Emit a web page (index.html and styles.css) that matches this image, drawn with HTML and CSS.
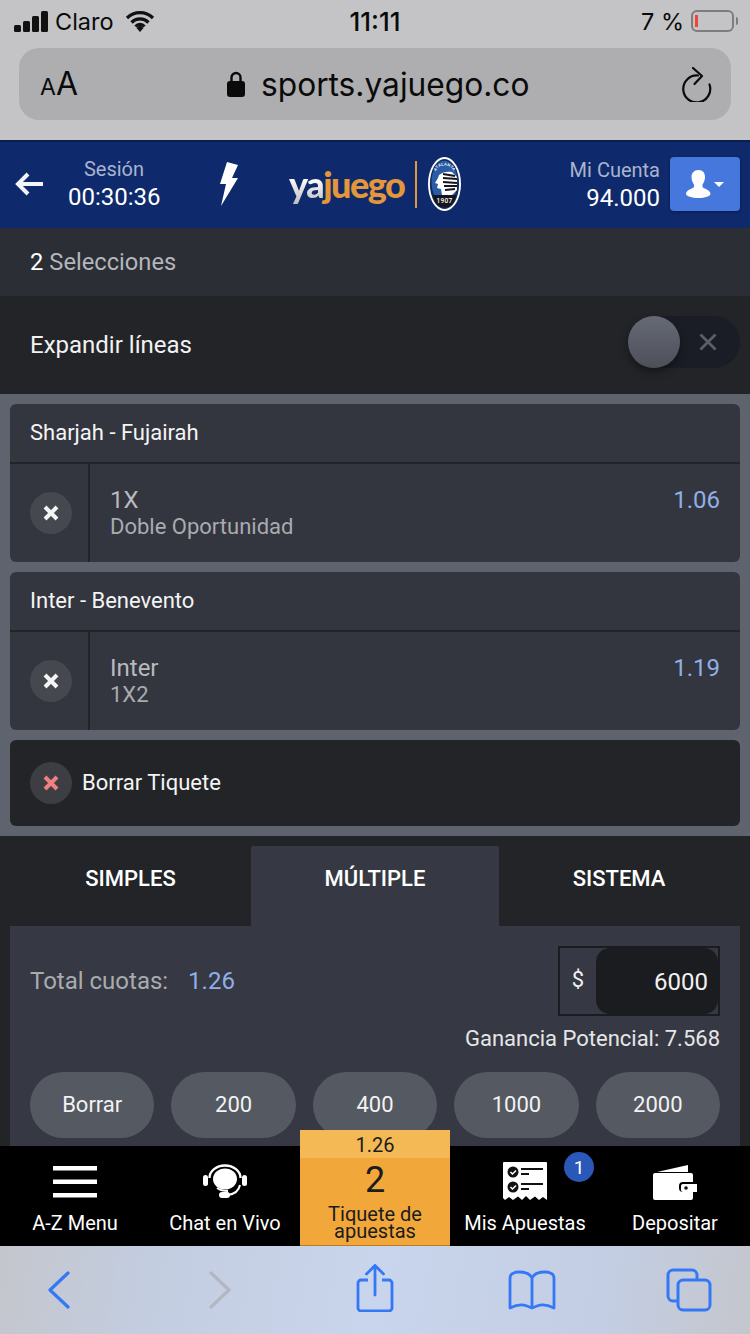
FILE: index.html
```html
<!DOCTYPE html>
<html lang="es">
<head>
<meta charset="utf-8">
<title>yajuego</title>
<link rel="stylesheet" href="styles.css">
</head>
<body>
<div class="page">
  <div class="browser-top">
    <div class="status">
      <div class="status-left">
        <svg class="signal" width="34" height="21" viewBox="0 0 34 21"><rect x="0" y="14" width="7" height="7" rx="1.5"/><rect x="9" y="10" width="7" height="11" rx="1.5"/><rect x="18" y="5" width="7" height="16" rx="1.5"/><rect x="27" y="0" width="7" height="21" rx="1.5"/></svg>
        <span>Claro</span>
        <svg class="wifi" width="30" height="22" viewBox="0 0 30 22"><path d="M2 8a18.500 18.500 0 0 1 26 0M6.500 12.500a12 12 0 0 1 17 0M10.500 16.500a6 6 0 0 1 9 0" fill="none" stroke="#111" stroke-width="3.200"/><path d="M11.500 18l3.500-3.500 3.500 3.500-3.500 4z" fill="#111"/></svg>
      </div>
      <div class="status-time">11:11</div>
      <div class="status-right">
        <span>7 %</span>
        <div class="battery"><i class="battery-level"></i></div>
        <i class="battery-cap"></i>
      </div>
    </div>
    <div class="urlbar">
      <div class="aa"><small>A</small>A</div>
      <div class="url">
        <svg width="18" height="26" viewBox="0 0 18 26"><path d="M4.500 11V6.500a4.500 4.500 0 0 1 9 0V11" fill="none" stroke="#0a0a0a" stroke-width="2.400"/><rect y="10" width="18" height="16" rx="3" fill="#0a0a0a"/></svg>
        <span>sports.yajuego.co</span>
      </div>
      <svg class="reload" width="32" height="36" viewBox="0 0 32 36"><path d="M18 9.500A13.500 13.500 0 1 0 29.500 18.500" fill="none" stroke="#0a0a0a" stroke-width="2.200" stroke-linecap="round"/><path d="M13 2l9 8-7.500 8" fill="none" stroke="#0a0a0a" stroke-width="2.200" stroke-linecap="round" stroke-linejoin="round"/></svg>
    </div>
  </div>

  <header class="site-header">
    <svg class="back" width="30" height="26" viewBox="0 0 30 26"><path d="M29 13H4M14 3L4 13l10 10" fill="none" stroke="#f2f4fa" stroke-width="4"/></svg>
    <div class="session">
      <div class="muted">Sesión</div>
      <div class="clock">00:30:36</div>
    </div>
    <svg class="bolt" width="18" height="44" viewBox="0 0 18 44"><path d="M7 0l11 3-6 13h6L1 44l5-22H0z" fill="#fff"/></svg>
    <div class="logo">
      <span class="logo-ya">ya</span><span class="logo-juego">juego</span>
      <i class="logo-rule"></i>
      <svg width="33" height="54" viewBox="0 0 33 54">
        <ellipse cx="16.500" cy="27" rx="16.500" ry="27" fill="#fff"/>
        <ellipse cx="16.500" cy="27" rx="14.600" ry="25" fill="#12275c"/>
        <ellipse cx="16.500" cy="25" rx="13" ry="21.500" fill="#2a5ba6"/>
        <path d="M4.500 38h24C26.500 46 22 50.500 16.500 50.500S6.500 46 4.500 38z" fill="#14161b"/>
        <path d="M11 18c3-3 9-4 13-3l5 5v13l-5 5H14l-1-6-4-1 1-4-3-1 3-5z" fill="#fff"/>
        <path d="M15 17l12 2M15 21l14 1M15 25l14 1M16 29l13 0M17 33l10-1" stroke="#14161b" stroke-width="1.800"/>
        <path id="crest-arc" d="M6 21C7 12 11 8.500 16.500 8.500S26 12 27 21" fill="none"/>
        <text class="crest-name"><textPath href="#crest-arc" startOffset="50%" text-anchor="middle">ATALANTA</textPath></text>
        <text class="crest-year" x="16.500" y="46" text-anchor="middle">1907</text>
      </svg>
    </div>
    <div class="account">
      <div class="account-text">
        <div class="muted">Mi Cuenta</div>
        <div class="clock">94.000</div>
      </div>
      <button class="account-btn">
        <svg width="38" height="28" viewBox="0 0 38 28"><path d="M12.500 0c4.500 0 6.500 3 6.500 7 0 3.500-1.500 6-2.500 7.500v2.500c2 2 8 3 8 7 0 2-5.500 4-12 4S0 26 0 24c0-4 6-5 8-7v-2.500C7 13 5.500 10.500 5.500 7c0-4 2.500-7 7-7z" fill="#fff"/><path d="M28 12h10l-5 5z" fill="#fff"/></svg>
      </button>
    </div>
  </header>

  <div class="selections"><b>2</b> Selecciones</div>

  <div class="expand">
    <span>Expandir líneas</span>
    <div class="toggle">
      <i class="knob"></i>
      <svg width="18" height="18" viewBox="0 0 18 18"><path d="M1.500 1.500l15 15M16.500 1.500l-15 15" stroke="#5c5f69" stroke-width="2.800"/></svg>
    </div>
  </div>

  <main class="content">
    <div class="slips">
      <section class="slip">
        <h2 class="slip-title">Sharjah - Fujairah</h2>
        <div class="slip-row">
          <div class="slip-remove"><span class="circle"><svg width="16" height="16" viewBox="0 0 16 16"><path d="M2 2l12 12M14 2L2 14" stroke="#f4f4f4" stroke-width="4"/></svg></span></div>
          <div class="slip-info">
            <div class="slip-pick">1X</div>
            <div class="slip-market">Doble Oportunidad</div>
          </div>
          <div class="slip-odd">1.06</div>
        </div>
      </section>
      <section class="slip">
        <h2 class="slip-title">Inter - Benevento</h2>
        <div class="slip-row">
          <div class="slip-remove"><span class="circle"><svg width="16" height="16" viewBox="0 0 16 16"><path d="M2 2l12 12M14 2L2 14" stroke="#f4f4f4" stroke-width="4"/></svg></span></div>
          <div class="slip-info">
            <div class="slip-pick">Inter</div>
            <div class="slip-market">1X2</div>
          </div>
          <div class="slip-odd">1.19</div>
        </div>
      </section>
      <div class="clear-ticket">
        <span class="circle"><svg width="16" height="16" viewBox="0 0 16 16"><path d="M2 2l12 12M14 2L2 14" stroke="#ef8080" stroke-width="4"/></svg></span>
        <span class="clear-label">Borrar Tiquete</span>
      </div>
    </div>

    <div class="betbox">
      <div class="tabs">
        <div class="tab">SIMPLES</div>
        <div class="tab tab-active">MÚLTIPLE</div>
        <div class="tab">SISTEMA</div>
      </div>
      <div class="panel">
        <div class="stake-row">
          <div class="total">Total cuotas: <span class="total-value">1.26</span></div>
          <div class="stake">
            <span class="currency">$</span>
            <span class="stake-input">6000</span>
          </div>
        </div>
        <div class="gain">Ganancia Potencial: 7.568</div>
        <div class="quick">
          <button>Borrar</button>
          <button>200</button>
          <button>400</button>
          <button>1000</button>
          <button>2000</button>
        </div>
      </div>
    </div>
  </main>

  <nav class="bottom-nav">
    <div class="nav-item">
      <div class="nav-icon"><svg width="44" height="32" viewBox="0 0 44 32"><path d="M0 0h44v4.500H0zM0 13.500h44V18H0zM0 27h44v4.500H0z" fill="#fff"/></svg></div>
      <span>A-Z Menu</span>
    </div>
    <div class="nav-item">
      <div class="nav-icon"><svg width="44" height="36" viewBox="0 0 44 36"><path d="M6.500 14a15.500 12.500 0 0 1 31 0" fill="none" stroke="#fff" stroke-width="2.400"/><ellipse cx="22" cy="15" rx="12" ry="10.500" fill="#fff"/><rect x="0" y="11" width="5" height="11" rx="2.500" fill="#fff"/><rect x="39" y="11" width="5" height="11" rx="2.500" fill="#fff"/><path d="M37 21c-1 5-5 9-12 10" fill="none" stroke="#fff" stroke-width="2"/><rect x="16" y="28" width="11" height="6" rx="3" fill="#fff"/><path d="M14 24c3 2 6 3 11 3" fill="none" stroke="#fff" stroke-width="2"/></svg></div>
      <span>Chat en Vivo</span>
    </div>
    <div class="nav-ticket">
      <div class="ticket-odds">1.26</div>
      <div class="ticket-main">
        <div class="ticket-count">2</div>
        <div class="ticket-label">Tiquete de apuestas</div>
      </div>
    </div>
    <div class="nav-item">
      <div class="nav-icon"><svg width="44" height="40" viewBox="0 0 44 40"><path d="M1 0h42a1 1 0 0 1 1 1v37l-4-3-4 3-4-3.500-5 3.500-4-4-4 4-4-3.500-5 3.500-4-3-4 3-2-2V1a1 1 0 0 1 1-1z" fill="#fff"/><circle cx="10" cy="10" r="5.500" fill="#111"/><circle cx="10" cy="25" r="5.500" fill="#111"/><path d="M7.500 10l2 2 3.500-3.500M7.500 25l2 2 3.500-3.500" fill="none" stroke="#fff" stroke-width="1.500"/><path d="M18 7h22M18 12h8M18 22h22M18 27h8" stroke="#111" stroke-width="2"/></svg></div>
      <span>Mis Apuestas</span>
      <i class="badge">1</i>
    </div>
    <div class="nav-item">
      <div class="nav-icon"><svg width="44" height="36" viewBox="0 0 44 36"><path d="M4 8L35 1v7z" fill="#fff"/><path d="M2 9h36a2 2 0 0 1 2 2v7H30a4 4 0 0 0-4 4v2a4 4 0 0 0 4 4h10v6a2 2 0 0 1-2 2H2a2 2 0 0 1-2-2V11a2 2 0 0 1 2-2z" fill="#fff"/><path d="M30 20h14v8H30a2 2 0 0 1-2-2v-4a2 2 0 0 1 2-2z" fill="#fff"/><circle cx="33" cy="24" r="1.800" fill="#111"/></svg></div>
      <span>Depositar</span>
    </div>
  </nav>

  <div class="browser-bottom">
    <svg class="bar-back" width="24" height="38" viewBox="0 0 24 38"><path d="M21 2L3 19l18 17" fill="none" stroke="#3478f6" stroke-width="3.200" stroke-linecap="round" stroke-linejoin="round"/></svg>
    <svg class="bar-forward" width="24" height="38" viewBox="0 0 24 38"><path d="M3 2l18 17L3 36" fill="none" stroke="#b3b7c1" stroke-width="3.200" stroke-linecap="round" stroke-linejoin="round"/></svg>
    <svg class="bar-share" width="38" height="48" viewBox="0 0 38 48"><path d="M12 16H5a3 3 0 0 0-3 3v25a3 3 0 0 0 3 3h28a3 3 0 0 0 3-3V19a3 3 0 0 0-3-3h-7" fill="none" stroke="#3478f6" stroke-width="2.800"/><path d="M19 31V2M10.500 10L19 1.500 27.500 10" fill="none" stroke="#3478f6" stroke-width="2.800" stroke-linecap="round"/></svg>
    <svg width="48" height="40" viewBox="0 0 48 40"><path d="M24 8C22 3 17 2 11 2 6 2 2 4 2 8v30c6-3 12-4 17-2l5 2 5-2c5-2 11-1 17 2V8c0-4-4-6-9-6-6 0-11 1-13 6zm0 0v30" fill="none" stroke="#3478f6" stroke-width="2.800" stroke-linejoin="round"/></svg>
    <svg width="46" height="44" viewBox="0 0 46 44"><rect x="12" y="12" width="32" height="30" rx="5" fill="none" stroke="#3478f6" stroke-width="3"/><path d="M12 33H7a5 5 0 0 1-5-5V7a5 5 0 0 1 5-5h19a5 5 0 0 1 5 5v5" fill="none" stroke="#3478f6" stroke-width="3"/></svg>
  </div>
</div>
</body>
</html>
```
FILE: styles.css
```css
* { box-sizing: border-box; }
html, body { margin: 0; padding: 0; }
body { font-family: Roboto, "Liberation Sans", sans-serif; background: #000; }
.page { width: 750px; height: 1334px; display: flex; flex-direction: column; overflow: hidden; position: relative; }

/* Safari top */
.browser-top { height: 140px; background: #c4c4c6; color: #0a0a0a; font-family: Inter, Roboto, sans-serif; flex: none; padding: 0 19px; }
.status { height: 48px; margin: 0 -7px 0 -5px; display: grid; grid-template-columns: 1fr auto 1fr; align-items: center; font-size: 23.500px; padding-bottom: 6px; }
.status-left { display: flex; align-items: center; gap: 7px; }
.signal { fill: #111; }
.wifi { margin-left: 4px; }
.status-time { font-size: 26px; font-weight: 500; padding-right: 2px; }
.status-right { display: flex; align-items: center; justify-content: flex-end; gap: 5px; }
.battery { width: 43px; height: 22px; border: 2px solid #7d7d80; border-radius: 6px; padding: 3px 0 3px 2px; margin-left: 2px; }
.battery-level { display: block; width: 3px; height: 12px; background: #ee4538; }
.battery-cap { width: 2px; height: 8px; background: #7d7d80; margin-left: -3px; border-radius: 0 2px 2px 0; }
.urlbar { height: 72px; background: #aeaeb0; border-radius: 20px; display: flex; align-items: center; padding: 0 19px 0 21px; position: relative; }
.aa { font-size: 32px; width: 187px; line-height: 1; }
.aa small { font-size: 23px; }
.url { display: flex; align-items: center; gap: 16px; font-size: 31.700px; flex: 1; }
.reload { flex: none; }

/* Site header */
.site-header { height: 88px; background: #0e2a6c; border-top: 2px solid #0a1f4e; flex: none; display: flex; align-items: center; padding: 0 10px 2px 14px; color: #fff; }
.back { margin-right: 24px; }
.session { width: 92px; text-align: center; margin-right: 60px; }
.muted { font-size: 20px; color: #a9b4cf; line-height: 26px; }
.clock { font-size: 24px; line-height: 30px; color: #fff; }
.bolt { margin-right: 51px; }
.logo { display: flex; align-items: center; width: 172px; font-family: Lato, Inter, sans-serif; font-weight: 900; font-size: 36px; letter-spacing: -1.500px; }
.logo-ya { color: transparent; background: linear-gradient(#ffffff 35%, #b9b9bb); -webkit-background-clip: text; background-clip: text; }
.logo-juego { color: #e3963a; }
.logo-rule { width: 1.500px; height: 47px; background: #e3963a; margin: 0 11px; flex: none; }
.logo svg { flex: none; }
.crest-name { font-family: Roboto, sans-serif; font-size: 4px; font-weight: 500; fill: #fff; letter-spacing: .3px; }
.crest-year { font-family: Roboto, sans-serif; font-size: 6.500px; font-weight: 500; fill: #fff; letter-spacing: .3px; }
.account { display: flex; align-items: center; gap: 10px; margin-left: auto; }
.account-text { text-align: right; padding-top: 2px; }
.account-btn { width: 70px; height: 54px; border: 0; border-radius: 4px; background: #4577dc; box-shadow: 0 1px 3px rgba(0,0,0,.35); display: flex; align-items: center; justify-content: center; padding: 0; }

/* Rows */
.selections { height: 68px; flex: none; background: #2b2e35; color: #b4b6bb; font-size: 23.700px; display: flex; align-items: center; gap: 6px; padding-left: 30px; }
.selections b { font-weight: 400; color: #fff; }
.expand { height: 98px; flex: none; background: #222428; color: #f2f2f3; font-size: 24px; display: flex; align-items: center; justify-content: space-between; padding: 0 10px 0 30px; }
.toggle { width: 112px; height: 52px; border-radius: 26px; background: #1b1d26; display: flex; align-items: center; justify-content: flex-end; padding-right: 23px; position: relative; margin-bottom: 6px; }
.knob { position: absolute; left: 0; top: 0; width: 52px; height: 52px; border-radius: 50%; background: linear-gradient(#666a75, #4d5059); box-shadow: 0 4px 8px rgba(0,0,0,.4); }

/* Slips */
.content { flex: 1; min-height: 0; background: #5f636d; padding-top: 10px; overflow: hidden; }
.slips { display: flex; flex-direction: column; gap: 10px; padding: 0 10px; }
.slip { height: 158px; background: #33363f; border-radius: 6px; overflow: hidden; }
.slip-title { margin: 0; height: 60px; border-bottom: 2px solid #222428; font-size: 22px; font-weight: 400; color: #f4f4f5; display: flex; align-items: center; padding: 0 0 2px 20px; }
.slip-row { height: 98px; display: flex; }
.slip-remove { width: 80px; flex: none; border-right: 2px solid #222428; display: flex; align-items: center; justify-content: center; padding-left: 4px; }
.circle { width: 42px; height: 42px; border-radius: 50%; background: #45484f; display: flex; align-items: center; justify-content: center; flex: none; }
.slip-info { flex: 1; padding: 23px 0 0 20px; }
.slip-pick { font-size: 24px; line-height: 27px; color: #b9babf; }
.slip-market { font-size: 22px; line-height: 26px; color: #a9abb0; }
.slip-odd { font-size: 24px; color: #8fb0e6; padding: 23px 20px 0 0; line-height: 27px; }
.clear-ticket { height: 86px; background: #222428; border-radius: 6px; display: flex; align-items: center; gap: 10px; padding-left: 20px; color: #f4f4f5; font-size: 22px; }
.clear-ticket .circle { background: #3c3e44; }
.clear-label { padding-bottom: 2px; }

/* Bet box */
.betbox { margin-top: 10px; background: #222428; padding-top: 10px; height: 400px; }
.tabs { display: grid; grid-template-columns: 251px 248px 1fr; height: 80px; }
.tab { display: flex; align-items: center; justify-content: center; color: #fff; font-size: 22px; font-weight: 500; padding-bottom: 16px; padding-left: 10px; }
.tab-active { background: #363943; border-radius: 2px 2px 0 0; padding-left: 0; }
.tab:last-child { padding-left: 0; padding-right: 11px; }
.panel { margin: 0 10px; background: #363943; padding: 20px 20px 0; height: 320px; }
.stake-row { display: flex; align-items: center; justify-content: space-between; }
.total { font-size: 24px; color: #a9abb0; }
.total-value { color: #8fb0e6; margin-left: 14px; }
.stake { width: 162px; height: 70px; border: 2px solid #1b1c20; display: flex; align-items: stretch; }
.currency { width: 36px; display: flex; align-items: center; justify-content: center; color: #f0f0f2; font-size: 22px; padding-bottom: 4px; }
.stake-input { flex: 1; background: #1b1c20; border-radius: 14px; color: #f2f2f3; font-size: 24px; display: flex; align-items: center; justify-content: flex-end; padding: 2px 10px 0 0; }
.gain { text-align: right; color: #e6e6e8; font-size: 22px; line-height: 28px; margin-top: 9px; }
.quick { display: flex; gap: 17px; margin-top: 19px; }
.quick button { flex: 1; height: 66px; border: 0; border-radius: 33px; background: #555961; color: #f2f2f3; font-family: inherit; font-size: 22px; padding: 0 0 2px; }

/* Bottom nav */
.bottom-nav { flex: none; height: 100px; background: #000; display: grid; grid-template-columns: repeat(5, 150px); color: #fff; position: relative; }
.nav-item { display: flex; flex-direction: column; align-items: center; position: relative; font-size: 20px; padding-top: 14px; gap: 6px; }
.nav-icon { height: 44px; display: flex; align-items: center; justify-content: center; }
.nav-item span { line-height: 26px; }
.nav-ticket { margin-top: -16px; display: flex; flex-direction: column; color: #1c1c1c; border-bottom: 1px solid #b87c24; background: #f2a73b; text-align: center; }
.ticket-odds { height: 28px; line-height: 31px; background: #f4b955; font-size: 20px; }
.ticket-main { flex: 1; }
.ticket-count { font-size: 36px; line-height: 44px; }
.ticket-label { font-size: 20px; line-height: 17px; padding: 0 20px; margin-top: 4px; }
.badge { position: absolute; left: 114px; top: 6px; width: 30px; height: 30px; border-radius: 50%; background: #2a58b8; font-style: normal; font-size: 19px; display: flex; align-items: center; justify-content: center; }

/* Safari bottom */
.browser-bottom { flex: none; height: 88px; background: linear-gradient(100deg, #c4c6cc 0%, #c3cde0 20%, #c9d5ec 50%, #c3cee4 80%, #c4c6cc 100%); display: grid; grid-template-columns: repeat(5, 157px); justify-content: center; justify-items: center; align-items: center; }
.bar-back { margin-right: 4px; }
.bar-forward { margin-left: 4px; }
.bar-share { margin-bottom: 4px; }
```
